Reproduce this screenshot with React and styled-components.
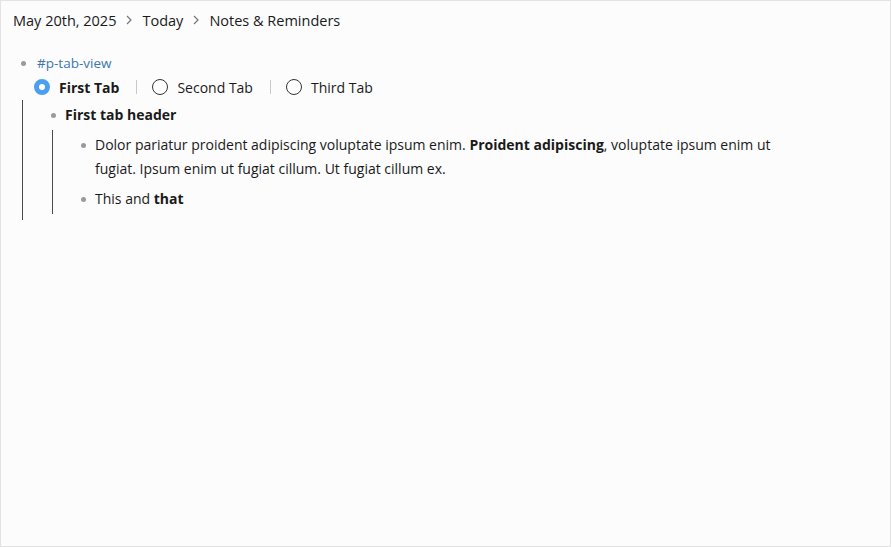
import React from "react"
import styled, { createGlobalStyle } from "styled-components"

const Global = createGlobalStyle`
  html, body {
    margin: 0;
    padding: 0;
    background: #fcfcfc;
  }
  body {
    font-family: "Open Sans", "Noto Sans", sans-serif;
    color: #1a1a1a;
  }
`

const Page = styled.div`
  box-sizing: border-box;
  width: 891px;
  height: 547px;
  border: 1px solid #e3e3e3;
  background: #fcfcfc;
  padding: 9px 12px 0 12px;
`

const Crumbs = styled.nav`
  display: flex;
  align-items: center;
  height: 20px;
  font-size: 14.5px;
  color: #1a1a1a;
`

const ChevronBox = styled.svg`
  margin: 0 9px 0 9px;
`

const Chevron = () => (
  <ChevronBox width="8" height="12" viewBox="0 0 8 12" fill="none">
    <path d="M2 2l4 4-4 4" stroke="#777" strokeWidth="1.2" />
  </ChevronBox>
)

const Outline = styled.div`
  max-width: 790px;
  margin-top: 21px;
`

const Row = styled.div`
  display: flex;
  align-items: flex-start;
  font-size: 14px;
  line-height: 24px;
  padding: ${p => (p.$flat ? 0 : 3)}px 0;
`

const Dot = styled.span`
  flex: none;
  width: 5px;
  height: 5px;
  border-radius: 50%;
  background: #9a9a9a;
  margin: 9.5px 9px 0 8px;
`

const Tag = styled.span`
  color: #3a78ae;
  font-size: 13.5px;
  margin-left: 2px;
`

const Children = styled.div`
  margin-left: 9px;
  border-left: 1px solid #4a4a4a;
  padding-left: 20px;
  margin-top: ${p => p.$top || 0}px;
  padding-bottom: ${p => p.$bottom || 0}px;
`

const Tabs = styled.div`
  display: flex;
  align-items: center;
  height: 24px;
  margin-left: 21px;
  font-size: 14px;
`

const Tab = styled.label`
  display: flex;
  align-items: center;
  gap: 9px;
  font-weight: ${p => (p.$active ? 700 : 400)};
  color: #1a1a1a;
`

const Radio = styled.span`
  box-sizing: border-box;
  width: 16px;
  height: 16px;
  border-radius: 50%;
  border: ${p => (p.$on ? "5px solid #4a9ff0" : "1.2px solid #333")};
  background: #fff;
`

const Sep = styled.span`
  width: 1px;
  height: 14px;
  background: #c8c8c8;
  margin: 0 15px 0 17px;
`

const Bold = styled.b`
  font-weight: 700;
`

export default function App() {
  return (
    <>
      <Global />
      <Page>
        <Crumbs>
          <span>May 20th, 2025</span>
          <Chevron />
          <span>Today</span>
          <Chevron />
          <span>Notes &amp; Reminders</span>
        </Crumbs>
        <Outline>
          <Row $flat>
            <Dot />
            <Tag>#p-tab-view</Tag>
          </Row>
          <Tabs>
            <Tab $active>
              <Radio $on />
              First Tab
            </Tab>
            <Sep />
            <Tab>
              <Radio />
              Second Tab
            </Tab>
            <Sep />
            <Tab>
              <Radio />
              Third Tab
            </Tab>
          </Tabs>
          <Children $top={1} $bottom={6}>
            <Row>
              <Dot />
              <Bold>First tab header</Bold>
            </Row>
            <Children>
              <Row>
                <Dot />
                <span>
                  Dolor pariatur proident adipiscing voluptate ipsum enim. <Bold>Proident adipiscing</Bold>, voluptate ipsum enim ut fugiat. Ipsum enim ut fugiat cillum. Ut fugiat cillum ex.
                </span>
              </Row>
              <Row>
                <Dot />
                <span>
                  This and <Bold>that</Bold>
                </span>
              </Row>
            </Children>
          </Children>
        </Outline>
      </Page>
    </>
  )
}
